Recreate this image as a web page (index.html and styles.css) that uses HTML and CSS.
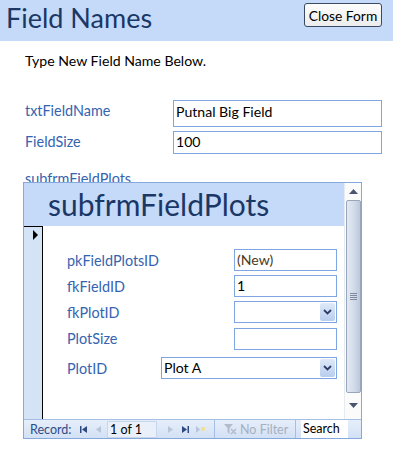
FILE: index.html
```html
<!DOCTYPE html>
<html>
<head>
<meta charset="utf-8">
<link rel="stylesheet" href="styles.css">
</head>
<body>
<div class="header">
  <h1 class="title">Field Names</h1>
  <button class="close-btn">Close Form</button>
</div>
<div class="main">
  <p class="intro">Type New Field Name Below.</p>
  <div class="row row-name">
    <span class="label">txtFieldName</span>
    <div class="textbox tb-name">Putnal Big Field</div>
  </div>
  <div class="row row-size">
    <span class="label">FieldSize</span>
    <div class="textbox tb-size">100</div>
  </div>
  <div class="sub-label">subfrmFieldPlots</div>
  <div class="subform">
    <div class="sub-body">
      <div class="sub-content">
        <div class="sub-header">subfrmFieldPlots</div>
        <div class="sub-detail">
          <div class="selector"><span class="sel-arrow"></span></div>
          <div class="fields">
            <div class="frow fr1"><span class="flabel">pkFieldPlotsID</span><div class="fbox new-val">(New)</div></div>
            <div class="frow fr2"><span class="flabel">fkFieldID</span><div class="fbox">1</div></div>
            <div class="frow fr3"><span class="flabel">fkPlotID</span><div class="fbox combo"><span class="ddbtn"><svg width="9" height="6" viewBox="0 0 9 6"><path d="M1 1 L4.5 4.5 L8 1" fill="none" stroke="#2b3f66" stroke-width="1.8"/></svg></span></div></div>
            <div class="frow fr4"><span class="flabel">PlotSize</span><div class="fbox"></div></div>
            <div class="frow fr5"><span class="flabel">PlotID</span><div class="fbox combo wide">Plot A<span class="ddbtn"><svg width="9" height="6" viewBox="0 0 9 6"><path d="M1 1 L4.5 4.5 L8 1" fill="none" stroke="#2b3f66" stroke-width="1.8"/></svg></span></div></div>
          </div>
        </div>
      </div>
      <div class="scrollbar">
        <div class="sb-arrow"><svg width="9" height="5" viewBox="0 0 9 5"><path d="M0 5 L4.5 0 L9 5 Z" fill="#4a5670"/></svg></div>
        <div class="sb-thumb"><span class="grip"></span></div>
        <div class="sb-arrow down"><svg width="9" height="5" viewBox="0 0 9 5"><path d="M0 0 L4.5 5 L9 0 Z" fill="#4a5670"/></svg></div>
      </div>
    </div>
    <div class="navbar">
      <span class="nav-label">Record:</span>
      <span class="nav-btn"><svg width="7" height="7" viewBox="0 0 7 7"><rect x="0" y="0" width="1.5" height="7" fill="#2f4a80"/><path d="M7 0 L2 3.5 L7 7 Z" fill="#2f4a80"/></svg></span>
      <span class="nav-btn"><svg width="5" height="7" viewBox="0 0 5 7"><path d="M5 0 L0 3.5 L5 7 Z" fill="#b8c4d8"/></svg></span>
      <span class="nav-pos">1 of 1</span>
      <span class="nav-btn nb-next"><svg width="5" height="7" viewBox="0 0 5 7"><path d="M0 0 L5 3.5 L0 7 Z" fill="#b8c4d8"/></svg></span>
      <span class="nav-btn"><svg width="7" height="7" viewBox="0 0 7 7"><path d="M0 0 L5 3.5 L0 7 Z" fill="#2f4a80"/><rect x="5.5" y="0" width="1.5" height="7" fill="#2f4a80"/></svg></span>
      <span class="nav-btn"><svg width="9" height="7" viewBox="0 0 9 7"><path d="M0 0 L4 3.5 L0 7 Z" fill="#b8c4d8"/><rect x="5" y="1" width="4" height="4" fill="#f0e0a0"/></svg></span>
      <span class="nav-sep"></span>
      <span class="nav-filter"><svg width="13" height="11" viewBox="0 0 13 11"><path d="M0 0 H9 L5.5 4 V10 L3.5 8 V4 Z" fill="#b3bccb"/><path d="M7 5 L12 10 M12 5 L7 10" stroke="#b3bccb" stroke-width="1.5"/></svg>No Filter</span>
      <span class="nav-sep"></span>
      <span class="nav-search">Search</span>
    </div>
  </div>
</div>
</body>
</html>
```
FILE: styles.css
```css
* { box-sizing: border-box; }
html, body { margin: 0; padding: 0; background: #ffffff; }
body {
  width: 393px;
  height: 450px;
  overflow: hidden;
  font-family: "Lato", "Open Sans", sans-serif;
  font-size: 14.1px;
  color: #000;
}
.header {
  height: 41px;
  background: #c5daf9;
  display: flex;
  justify-content: space-between;
  align-items: flex-start;
  padding: 0 11px 0 6px;
}
.title {
  margin: 0;
  font-weight: normal;
  font-size: 27px;
  line-height: 36px;
  color: #1a3766;
  letter-spacing: 0;
}
.close-btn {
  margin-top: 3px;
  width: 78px;
  height: 24px;
  padding: 0;
  font-family: "Lato", sans-serif;
  font-size: 13.8px;
  color: #000;
  border: 1px solid #3b4a63;
  border-radius: 3px;
  background: linear-gradient(#fdfdfd, #ececec);
}
.main {
  padding: 0 0 0 23px;
}
.intro {
  margin: 12px 0 0 2px;
  line-height: 16px;
  height: 16px;
}
.row {
  display: flex;
  align-items: flex-start;
}
.label {
  width: 150px;
  padding-left: 2px;
  color: #3563b0;
  font-size: 14.4px;
  line-height: 20px;
}
.row-name { margin-top: 31px; }
.row-name .label { margin-top: 1px; }
.row-size { margin-top: 4px; }
.row-size .label { margin-top: 1px; }
.textbox {
  width: 209px;
  border: 1px solid #7fa6e2;
  padding-left: 2px;
  line-height: 20px;
}
.tb-name { height: 27px; padding-top: 1px; }
.tb-size { height: 23px; }
.sub-label {
  margin-top: 17px;
  padding-left: 2px;
  height: 11px;
  line-height: 16px;
  font-size: 14.4px;
  color: #3563b0;
}
.subform {
  position: relative;
  width: 339px;
  height: 257px;
  border: 1px solid #86a8dc;
  background: #fff;
  display: flex;
  flex-direction: column;
}
.sub-body {
  flex: 1;
  display: flex;
}
.sub-content {
  width: 320px;
  display: flex;
  flex-direction: column;
}
.sub-header {
  height: 43px;
  background: #c5daf9;
  padding-left: 24px;
  font-size: 30px;
  line-height: 43px;
  color: #1a3766;
  white-space: nowrap;
  overflow: hidden;
}
.sub-detail {
  flex: 1;
  display: flex;
}
.selector {
  width: 19px;
  flex: none;
  background: #d5e3f6;
  border-top: 1px solid #000;
  border-right: 1px solid #000;
  padding: 3px 0 0 9px;
}
.sel-arrow {
  display: block;
  width: 0;
  height: 0;
  border-top: 5px solid transparent;
  border-bottom: 5px solid transparent;
  border-left: 5px solid #000;
}
.fields {
  flex: 1;
  padding-top: 23px;
}
.frow {
  display: flex;
  align-items: center;
  justify-content: space-between;
  padding-left: 24px;
  padding-right: 7px;
  height: 22px;
  margin-bottom: 4px;
}
.flabel {
  color: #3563b0;
  font-size: 14.4px;
}
.fbox {
  width: 103px;
  height: 22px;
  border: 1px solid #7fa6e2;
  padding-left: 2px;
  line-height: 20px;
  position: relative;
}
.new-val { color: #4a3a22; }
.fr4 { height: 23px; }
.fr5 { margin-top: 7px; height: 22px; }
.fbox.wide { width: 176px; }
.ddbtn {
  position: absolute;
  right: 1px;
  top: 1px;
  width: 15px;
  height: 18px;
  border-radius: 2px;
  background: linear-gradient(#dfe9f8, #b8cdee);
  display: flex;
  align-items: center;
  justify-content: center;
}
.scrollbar {
  width: 17px;
  background: #fbfbfb;
  border-left: 1px solid #e6ebf2;
  display: flex;
  flex-direction: column;
  align-items: center;
}
.sb-arrow {
  height: 17px;
  display: flex;
  align-items: center;
  justify-content: center;
}
.sb-thumb {
  width: 15px;
  height: 193px;
  border: 1px solid #98a6bd;
  border-radius: 2px;
  background: linear-gradient(90deg, #e4eaf3, #cfd9e7 60%, #bcc8da);
  display: flex;
  align-items: center;
  justify-content: center;
}
.grip {
  width: 7px;
  height: 7px;
  background: repeating-linear-gradient(#7d8aa0 0 1px, transparent 1px 2px);
}
.sb-arrow.down { height: 25px; }
.navbar {
  height: 19px;
  border-top: 1px solid #a5bfe4;
  background: linear-gradient(#e6eefa, #d3e1f5);
  display: flex;
  align-items: center;
  font-size: 12.5px;
  padding-left: 6px;
}
.nav-label { color: #2c4c86; width: 46px; }
.nav-btn {
  width: 15px;
  display: flex;
  align-items: center;
  justify-content: center;
}
.nav-pos {
  width: 50px;
  height: 17px;
  margin-left: 1px;
  line-height: 16px;
  padding-left: 2px;
  background: #eaf0fa;
  border: 1px solid #c7d6ec;
  color: #000;
}
.nb-next { margin-left: 6px; }
.nav-sep {
  width: 1px;
  height: 18px;
  background: #a5bfe4;
  margin: 0 0 0 6px;
}
.nav-filter {
  display: flex;
  align-items: center;
  gap: 3px;
  color: #a7b0be;
  padding-left: 9px;
  width: 74px;
  white-space: nowrap;
}
.nav-search {
  width: 47px;
  height: 18px;
  margin-left: 5px;
  background: #fff;
  line-height: 17px;
  padding-left: 2px;
  color: #000;
}
```
